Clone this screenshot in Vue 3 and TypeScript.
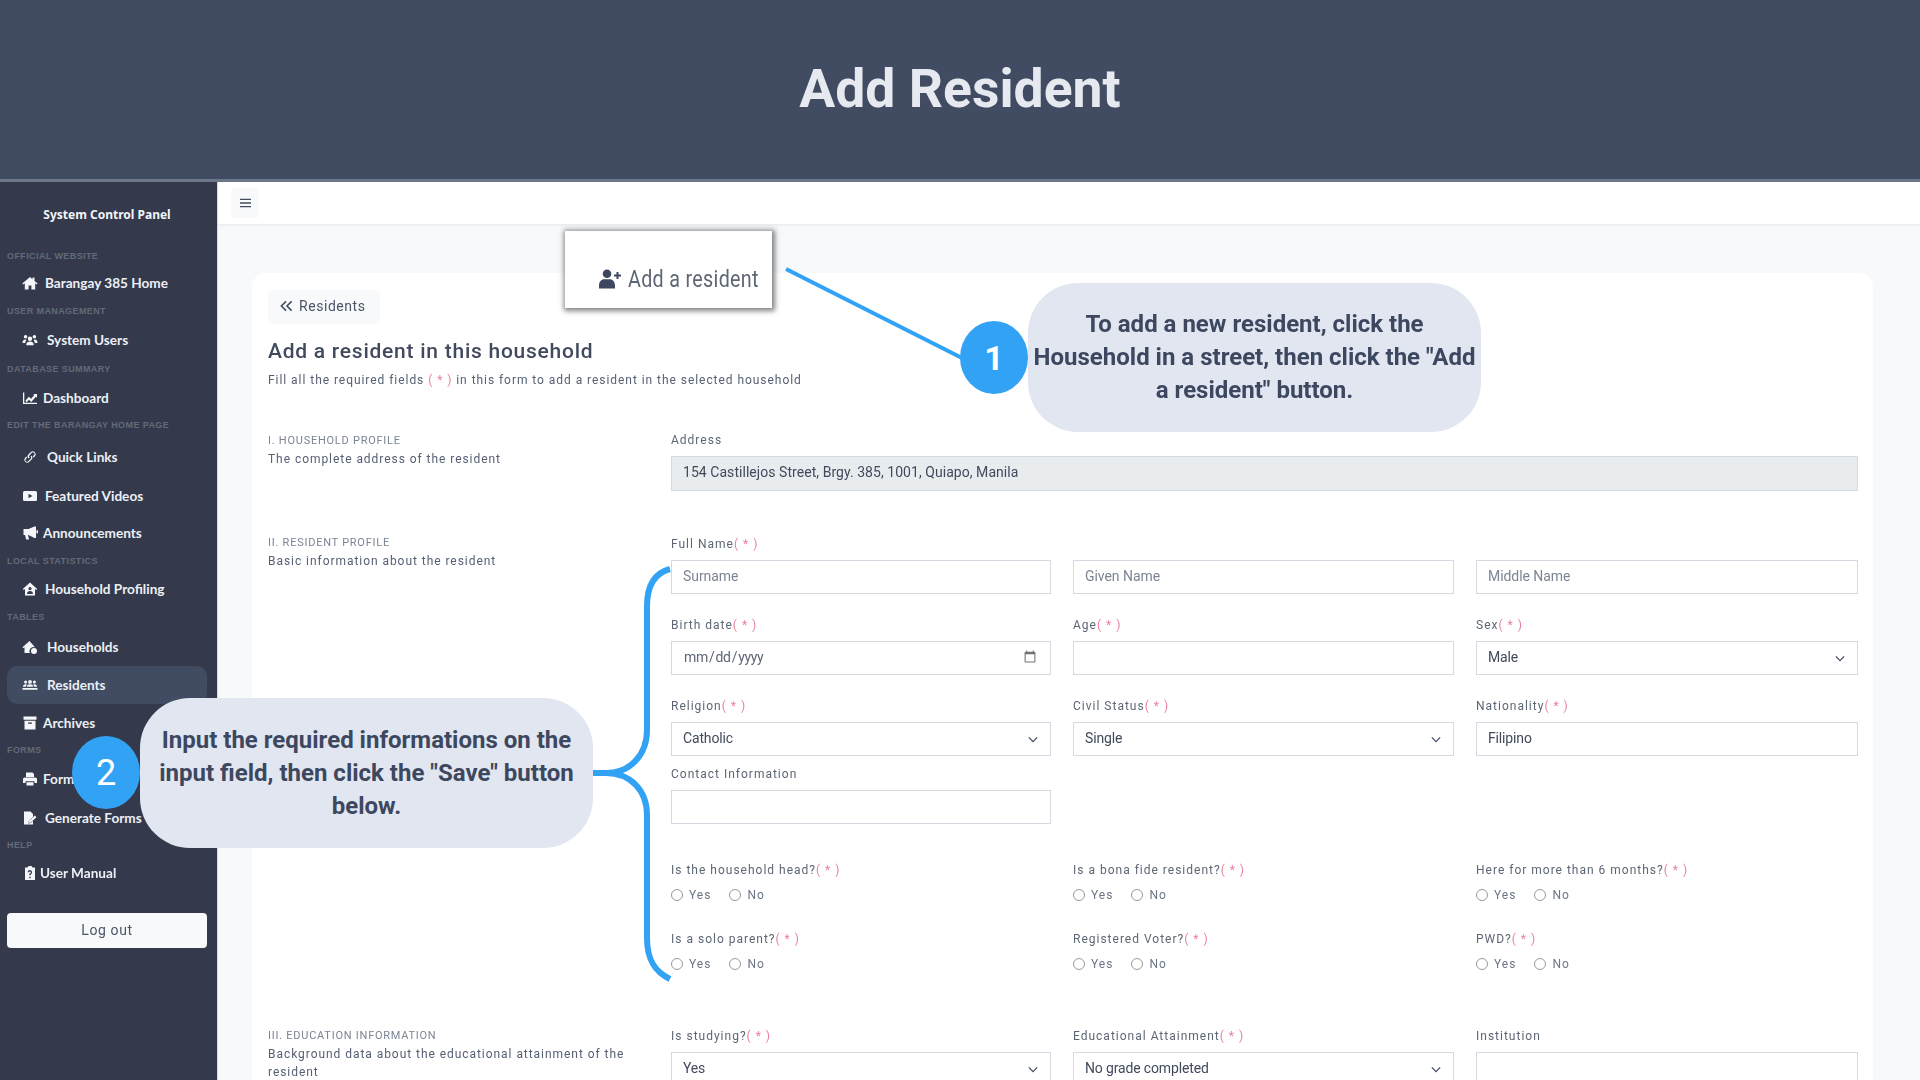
<script setup lang="ts">
interface NavRow { kind: 'brand' | 'head' | 'item'; text: string; h: number; icon?: string; w?: number; active?: boolean }
interface Field { label: string; req?: boolean; type: 'text' | 'date' | 'select' | 'radio' | 'empty'; value?: string; placeholder?: string }
interface Row { gap: string; fields: Field[] }

const icons: Record<string, string> = {
  home: 'M8 2 .3 8.600l.9 1L2.800 8.300V14.500h3.800V10.500h2.800v4h3.800V8.300l1.600 1.300.9-1L12.500 6V2.600h-2v1.700z',
  users: 'M3.600 3a1.800 1.800 0 1 1 0 3.600 1.800 1.800 0 0 1 0-3.600zm8.800 0a1.800 1.800 0 1 1 0 3.600 1.800 1.800 0 0 1 0-3.600zM8 4.600a2.200 2.200 0 1 1 0 4.400 2.200 2.200 0 0 1 0-4.400zM.5 11c0-2 .9-3.400 2.600-3.400.6 0 1.100.2 1.500.5-.8.7-1.300 1.700-1.300 2.900zm15 0c0-2-.9-3.400-2.600-3.400-.6 0-1.100.2-1.500.5.8.7 1.300 1.700 1.300 2.900zM4.200 13.200c0-2.600 1.400-3.800 3.800-3.800s3.800 1.200 3.800 3.800z',
  chart: 'M1 2.500h1.300v10.200H15V14H1zM3.500 10.500l3.300-3.800 2.300 2 3.200-3.700-1.200-1H15v3.800l-1.100-1.100-4.600 5.200-2.400-2.100-2.400 2.700z',
  link: 'M6.600 9.400a3 3 0 0 1 0-4.200l2.300-2.300a3 3 0 0 1 4.200 4.200l-1.300 1.300-1-1 1.300-1.300a1.600 1.600 0 0 0-2.300-2.300L7.600 6.200a1.600 1.600 0 0 0 0 2.200zM9.400 6.600a3 3 0 0 1 0 4.200l-2.300 2.300a3 3 0 0 1-4.200-4.200l1.300-1.300 1 1-1.300 1.300a1.600 1.600 0 0 0 2.300 2.300l2.500-2.400a1.600 1.600 0 0 0 0-2.200z',
  video: 'M2.500 3h11A1.500 1.500 0 0 1 15 4.500v7a1.500 1.500 0 0 1-1.500 1.500h-11A1.500 1.500 0 0 1 1 11.500v-7A1.500 1.500 0 0 1 2.500 3zm4 2.800v4.400L10.500 8z',
  horn: 'M14 1.500v11.500h-1.500l-6-3H6l1 4.500H4.200L3 10H1.500V4H6.500l6-2.500zm.5 3.500a1.800 1.800 0 0 1 0 3.600z',
  houseuser: 'M8 1.500.8 8l.9 1L3 7.900V14.500h10V7.900L14.300 9l.9-1zM8 6a1.600 1.600 0 1 1 0 3.200A1.600 1.600 0 0 1 8 6zM5 13c0-1.800 1.200-2.900 3-2.900s3 1.100 3 2.900z',
  houses: 'M7.500 2 .5 8.300l.8.9L2.500 8.200V14H8a4 4 0 0 1 4.500-5.800l.5.100L7.500 2zM12 9a3 3 0 1 1 0 6 3 3 0 0 1 0-6z',
  group: 'M3.600 3.500a1.500 1.500 0 1 1 0 3 1.500 1.500 0 0 1 0-3zm8.800 0a1.500 1.500 0 1 1 0 3 1.500 1.500 0 0 1 0-3zM8 3a1.900 1.900 0 1 1 0 3.800A1.900 1.900 0 0 1 8 3zM1 9.800c0-1.500.9-2.600 2.600-2.600h1.300c-.5.600-.8 1.500-.8 2.600zm14 0c0-1.500-.9-2.600-2.600-2.600h-1.300c.5.600.8 1.500.8 2.600zM5 9.800c0-1.800 1-2.500 3-2.500s3 .7 3 2.500zM.5 11h15v1.800H.5z',
  box: 'M1.500 1.500h13v3.200h-13zM2.500 5.700h11V14.500h-11zM6 7.500v1.200h4V7.500z',
  print: 'M4 1.500h6.500L12 3v3H4zM2.500 6.500h11A1.500 1.500 0 0 1 15 8v4h-2.500v-1.800h-9V12H1V8a1.500 1.500 0 0 1 1.500-1.500zM4.500 11.200h7v3.300h-7z',
  sign: 'M2 1.500h6.500L11 4v2.800L6.800 11l-.5 2.500 2.500-.5L11 10.800v3.700H2zM12.800 5.500l1.700 1.700-5.800 5.300-2 .4.400-2z',
  clip: 'M5.500 2.500 6.500 1h3l1 1.500H13V15H3V2.500zM8 5a2.300 2.300 0 0 0-2.300 2.300h1.400a.9.900 0 1 1 1.300.8c-.6.4-1.100.8-1.100 1.700v.4h1.400v-.4c0-.3.200-.5.600-.8A2.300 2.300 0 0 0 8 5zm-.7 6.800v1.400h1.400v-1.400z'
}

const nav: NavRow[] = [
  { kind: 'brand', text: 'System Control Panel', h: 56 },
  { kind: 'head', text: 'OFFICIAL WEBSITE', h: 28 },
  { kind: 'item', text: 'Barangay 385 Home', h: 26, icon: 'home', w: 23 },
  { kind: 'head', text: 'USER MANAGEMENT', h: 30 },
  { kind: 'item', text: 'System Users', h: 28, icon: 'users', w: 25 },
  { kind: 'head', text: 'DATABASE SUMMARY', h: 29 },
  { kind: 'item', text: 'Dashboard', h: 30, icon: 'chart', w: 21 },
  { kind: 'head', text: 'EDIT THE BARANGAY HOME PAGE', h: 24 },
  { kind: 'item', text: 'Quick Links', h: 40, icon: 'link', w: 25 },
  { kind: 'item', text: 'Featured Videos', h: 38, icon: 'video', w: 23 },
  { kind: 'item', text: 'Announcements', h: 36, icon: 'horn', w: 21 },
  { kind: 'head', text: 'LOCAL STATISTICS', h: 20 },
  { kind: 'item', text: 'Household Profiling', h: 36, icon: 'houseuser', w: 23 },
  { kind: 'head', text: 'TABLES', h: 20 },
  { kind: 'item', text: 'Households', h: 39, icon: 'houses', w: 25 },
  { kind: 'item', text: 'Residents', h: 38, icon: 'group', w: 25, active: true },
  { kind: 'item', text: 'Archives', h: 37, icon: 'box', w: 21 },
  { kind: 'head', text: 'FORMS', h: 17 },
  { kind: 'item', text: 'Forms', h: 42, icon: 'print', w: 21 },
  { kind: 'item', text: 'Generate Forms', h: 36, icon: 'sign', w: 23 },
  { kind: 'head', text: 'HELP', h: 18 },
  { kind: 'item', text: 'User Manual', h: 38, icon: 'clip', w: 18 }
]

const addressRow: Field[] = [{ label: 'Address', type: 'text', value: '154 Castillejos Street, Brgy. 385, 1001, Quiapo, Manila' }]

const residentRows: Row[] = [
  { gap: 'g0', fields: [
    { label: 'Full Name', req: true, type: 'text', placeholder: 'Surname' },
    { label: '', type: 'text', placeholder: 'Given Name' },
    { label: '', type: 'text', placeholder: 'Middle Name' }
  ] },
  { gap: 'g21', fields: [
    { label: 'Birth date', req: true, type: 'date' },
    { label: 'Age', req: true, type: 'text' },
    { label: 'Sex', req: true, type: 'select', value: 'Male' }
  ] },
  { gap: 'g21', fields: [
    { label: 'Religion', req: true, type: 'select', value: 'Catholic' },
    { label: 'Civil Status', req: true, type: 'select', value: 'Single' },
    { label: 'Nationality', req: true, type: 'text', value: 'Filipino' }
  ] },
  { gap: 'g8', fields: [
    { label: 'Contact Information', type: 'text' },
    { label: '', type: 'empty' },
    { label: '', type: 'empty' }
  ] },
  { gap: 'g36', fields: [
    { label: 'Is the household head?', req: true, type: 'radio' },
    { label: 'Is a bona fide resident?', req: true, type: 'radio' },
    { label: 'Here for more than 6 months?', req: true, type: 'radio' }
  ] },
  { gap: 'g25', fields: [
    { label: 'Is a solo parent?', req: true, type: 'radio' },
    { label: 'Registered Voter?', req: true, type: 'radio' },
    { label: 'PWD?', req: true, type: 'radio' }
  ] }
]

const educationRows: Row[] = [
  { gap: 'g0', fields: [
    { label: 'Is studying?', req: true, type: 'select', value: 'Yes' },
    { label: 'Educational Attainment', req: true, type: 'select', value: 'No grade completed' },
    { label: 'Institution', type: 'text' }
  ] }
]

const sections = [
  { title: 'I. HOUSEHOLD PROFILE', desc: 'The complete address of the resident', rows: [] as Row[], cls: 's1' },
  { title: 'II. RESIDENT PROFILE', desc: 'Basic information about the resident', rows: residentRows, cls: 's2' },
  { title: 'III. EDUCATION INFORMATION', desc: 'Background data about the educational attainment of the resident', rows: educationRows, cls: 's3' }
]
</script>

<template>
  <div class="page">
    <header class="hero"><h1>Add Resident</h1></header>

    <div class="shell">
      <aside class="side">
        <nav class="nav">
          <div
            v-for="row in nav"
            :key="row.text"
            :class="row.kind"
            :style="{ height: row.h + 'px' }"
          >
            <span v-if="row.kind !== 'item'">{{ row.text }}</span>
            <div v-else class="link" :class="{ active: row.active }">
              <span class="ico" :style="{ width: row.w + 'px' }">
                <svg viewBox="0 0 16 16" width="16" height="16"><path :d="icons[row.icon as string]" fill="#f4f6fa" fill-rule="evenodd" /></svg>
              </span>
              <span class="link-text">{{ row.text }}</span>
            </div>
          </div>
        </nav>
        <button class="logout" type="button">Log out</button>
      </aside>

      <div class="main">
        <div class="topbar">
          <button class="toggle" type="button" aria-label="Menu">
            <svg viewBox="0 0 12 10" width="11" height="10"><path d="M0 1h12M0 5h12M0 9h12" stroke="#414c63" stroke-width="1.400" /></svg>
          </button>
        </div>

        <div class="content">
          <section class="card">
            <button class="back" type="button">
              <svg viewBox="0 0 14 12" width="13" height="12"><path d="M6.500 1 1.500 6l5 5M12.500 1l-5 5 5 5" fill="none" stroke="#414c63" stroke-width="1.700" /></svg>
              <span>Residents</span>
            </button>
            <h2 class="title">Add a resident in this household</h2>
            <p class="sub">Fill all the required fields <span class="req">( * )</span> in this form to add a resident in the selected household</p>

            <div v-for="s in sections" :key="s.title" class="section" :class="s.cls">
              <div class="intro">
                <div class="intro-title">{{ s.title }}</div>
                <div class="intro-desc">{{ s.desc }}</div>
              </div>
              <div class="fields">
                <div v-if="s.cls === 's1'" class="one">
                  <div v-for="f in addressRow" :key="f.label" class="field">
                    <label class="lbl lbl-tight">{{ f.label }}</label>
                    <input class="ctl readonly" type="text" :value="f.value" readonly />
                  </div>
                </div>
                <div v-for="(r, ri) in s.rows" :key="ri" class="row" :class="r.gap">
                  <div v-for="(f, fi) in r.fields" :key="fi" class="field">
                    <template v-if="f.type !== 'empty'">
                      <label class="lbl">{{ f.label }}<span v-if="f.req" class="req">( * )</span></label>
                      <input v-if="f.type === 'text'" class="ctl" type="text" :value="f.value" :placeholder="f.placeholder" />
                      <input v-else-if="f.type === 'date'" class="ctl" type="date" />
                      <div v-else-if="f.type === 'select'" class="sel">
                        <select class="ctl"><option>{{ f.value }}</option></select>
                        <svg class="chev" viewBox="0 0 12 8" width="10" height="7"><path d="M1 1.500 6 6.500l5-5" fill="none" stroke="#414c63" stroke-width="1.500" /></svg>
                      </div>
                      <div v-else class="radios">
                        <label class="radio"><input type="radio" :name="'r' + ri + fi" />Yes</label>
                        <label class="radio"><input type="radio" :name="'r' + ri + fi" />No</label>
                      </div>
                    </template>
                  </div>
                </div>
              </div>
            </div>
          </section>
        </div>
      </div>
    </div>

    <div class="shot">
      <svg class="shot-ico" viewBox="0 0 24 20" width="24" height="21"><path d="M9 1a4.300 4.300 0 1 1 0 8.600A4.300 4.300 0 0 1 9 1zM1 20v-3c0-4 2.500-6.300 5-6.300h6c2.500 0 5 2.300 5 6.300v3zM18.500 6V3.500h2V6H23v2h-2.500v2.500h-2V8H16V6z" fill="#3d4860" /></svg>
      <span class="shot-text">Add a resident</span>
    </div>

    <svg class="lines" viewBox="0 0 1920 1080" width="1920" height="1080">
      <path d="M786 269 962 358" fill="none" stroke="#32a2f5" stroke-width="4" />
      <path d="M670 569C655 573 647 585 647 606V730C647 755 630 773 606 773H593M606 773C630 773 647 790 647 815V938C647 960 655 972 670 979" fill="none" stroke="#32a2f5" stroke-width="6" />
    </svg>

    <div class="dot dot1">1</div>
    <div class="bubble bubble1">To add a new resident, click the Household in a street, then click the "Add a resident" button.</div>
    <div class="dot dot2">2</div>
    <div class="bubble bubble2">Input the required informations on the input field, then click the "Save" button below.</div>
  </div>
</template>

<style scoped>
.page {
  position: relative;
  width: 1920px;
  height: 1080px;
  overflow: hidden;
  background: #f8f9fb;
  font-family: Roboto, "Liberation Sans", sans-serif;
  color: #4a5568;
}
.hero {
  height: 179px;
  background: #414c63;
  border-bottom: 3px solid #6d778a;
  display: flex;
  align-items: center;
  justify-content: center;
}
.hero h1 {
  margin: 0 0 2px;
  font-size: 53.500px;
  font-weight: 700;
  color: #e6e9f0;
  line-height: 1;
}
.shell {
  display: flex;
  height: 898px;
  filter: blur(0.35px);
}
.side {
  width: 218px;
  flex: none;
  background: #343a4b;
  border-right: 1px solid #d7dbe2;
  box-sizing: border-box;
  padding: 4px 10px 0 7px;
}
.brand {
  display: flex;
  align-items: center;
  justify-content: center;
  font-family: "Noto Sans", Roboto, sans-serif;
  font-size: 12px;
  font-weight: 700;
  color: #f3f5f9;
}
.head {
  display: flex;
  align-items: center;
  font-family: "Liberation Sans", sans-serif;
  font-size: 9px;
  font-weight: 700;
  letter-spacing: 0.4px;
  color: #636a78;
  white-space: nowrap;
}
.item { display: flex; align-items: center; }
.link {
  display: flex;
  align-items: center;
  width: 100%;
  height: 100%;
  padding-left: 15px;
  box-sizing: border-box;
  font-family: Lato, Roboto, sans-serif;
  font-size: 13.600px;
  font-weight: 700;
  color: #eceff5;
  white-space: nowrap;
}
.link.active { background: #414c63; border-radius: 10px; }
.ico { display: inline-flex; flex: none; align-items: center; }
.logout {
  display: block;
  width: 200px;
  height: 35px;
  margin-top: 21px;
  border: none;
  border-radius: 4px;
  background: #f8f9fa;
  color: #4a5568;
  font: 400 14px Roboto, sans-serif;
  letter-spacing: 0.6px;
  padding: 0 0 2px;
}
.main { flex: 1; min-width: 0; display: flex; flex-direction: column; }
.topbar {
  height: 42px;
  flex: none;
  background: #fff;
  box-shadow: 0 1px 3px rgba(60, 70, 90, 0.1);
  display: flex;
  align-items: center;
  padding-left: 13px;
  position: relative;
}
.toggle {
  width: 28px;
  height: 30px;
  border: none;
  border-radius: 4px;
  background: #f8f9fa;
  padding: 0;
  display: flex;
  align-items: center;
  justify-content: center;
}
.content { padding: 49px 47px 0 34px; }
.card {
  background: #fff;
  border-radius: 14px 14px 0 0;
  padding: 17px 15px 0 16px;
  height: 900px;
  box-sizing: border-box;
}
.back {
  display: flex;
  align-items: center;
  gap: 6px;
  height: 34px;
  width: 112px;
  padding: 0 0 3px 12px;
  border: none;
  border-radius: 5px;
  background: #f8f9fa;
  color: #4a5568;
  font: 400 14px Roboto, sans-serif;
  letter-spacing: 0.55px;
}
.title {
  margin: 13px 0 0;
  height: 28px;
  line-height: 28px;
  font-size: 21px;
  font-weight: 500;
  letter-spacing: 0.75px;
  color: #414a5c;
}
.sub {
  margin: 6px 0 0;
  font-size: 12px;
  line-height: 18px;
  letter-spacing: 0.95px;
  color: #566074;
}
.req { color: #ea7f9c; }
.section { display: flex; }
.s1 { margin-top: 42px; }
.s2 { margin-top: 43px; }
.s3 { margin-top: 53px; }
.intro { width: 403px; flex: none; padding-right: 30px; box-sizing: border-box; }
.s1 .intro, .s3 .intro { padding-top: 1px; }
.intro-title {
  font-size: 11px;
  line-height: 18px;
  letter-spacing: 0.75px;
  color: #7b8494;
}
.intro-desc {
  font-size: 12px;
  line-height: 18px;
  letter-spacing: 0.95px;
  color: #566074;
}
.fields { width: 1187px; flex: none; }
.row {
  display: grid;
  grid-template-columns: 380px 381px 382px;
  column-gap: 22px;
}
.g21 { margin-top: 21px; }
.g8 { margin-top: 8px; }
.g36 { margin-top: 36px; }
.g25 { margin-top: 25px; }
.lbl {
  display: block;
  height: 18px;
  margin-bottom: 8px;
  font-size: 12px;
  line-height: 20px;
  letter-spacing: 1px;
  color: #5d6675;
  white-space: nowrap;
}
.lbl-tight { margin-bottom: 7px; line-height: 18px; }
.one { width: 1187px; }
.ctl {
  display: block;
  width: 100%;
  height: 34px;
  box-sizing: border-box;
  padding: 0 11px 3px;
  border: 1.500px solid #d5dae2;
  border-radius: 0;
  background: #fff;
  font: 400 14px Roboto, sans-serif;
  letter-spacing: -0.150px;
  color: #414a5c;
  outline: none;
}
.ctl::placeholder { color: #7d8594; opacity: 1; letter-spacing: -0.050px; }
.ctl::-webkit-calendar-picker-indicator { opacity: 0.55; }
.ctl::-webkit-datetime-edit { letter-spacing: -0.300px; color: #5d6675; }
.readonly { background: #e9ecef; height: 35px; letter-spacing: 0.050px; }
.sel { position: relative; }
.sel select { appearance: none; }
.chev { position: absolute; right: 13px; top: 14px; pointer-events: none; }
.radios { display: flex; gap: 18px; height: 18px; align-items: center; }
.radio {
  display: flex;
  align-items: center;
  gap: 6px;
  font-size: 12px;
  letter-spacing: 1px;
  color: #6d7686;
}
.radio input {
  margin: 0;
  width: 12px;
  height: 12px;
  opacity: 0.75;
}
.shot {
  position: absolute;
  left: 565px;
  top: 231px;
  width: 207px;
  height: 77px;
  box-sizing: border-box;
  background: #fff;
  box-shadow: 1px 1px 5px 2px rgba(30, 30, 30, 0.55);
  display: flex;
  align-items: center;
  padding: 18px 0 0 33px;
  gap: 6px;
}
.shot-ico { flex: none; }
.shot-text {
  display: inline-block;
  flex: none;
  font-size: 24px;
  letter-spacing: 0.4px;
  color: #5d6675;
  transform: scaleX(0.82);
  transform-origin: left center;
  white-space: nowrap;
}
.lines { position: absolute; left: 0; top: 0; pointer-events: none; }
.dot {
  position: absolute;
  display: flex;
  align-items: center;
  justify-content: center;
  border-radius: 50%;
  background: #32a2f5;
  color: #fff;
}
.dot1 { left: 960px; top: 321px; width: 68px; height: 73px; font-size: 34px; font-weight: 700; }
.dot2 { left: 72px; top: 736px; width: 68px; height: 73px; font-size: 36px; font-weight: 400; }
.bubble {
  position: absolute;
  display: flex;
  align-items: center;
  justify-content: center;
  text-align: center;
  box-sizing: border-box;
  background: #e1e6f0;
  border-radius: 50px;
  color: #3d4860;
  font-size: 24px;
  font-weight: 700;
  line-height: 33px;
}
.bubble1 { left: 1028px; top: 283px; width: 453px; height: 149px; padding: 0 2px; }
.bubble2 { left: 140px; top: 698px; width: 453px; height: 150px; padding: 0 14px; }
</style>
